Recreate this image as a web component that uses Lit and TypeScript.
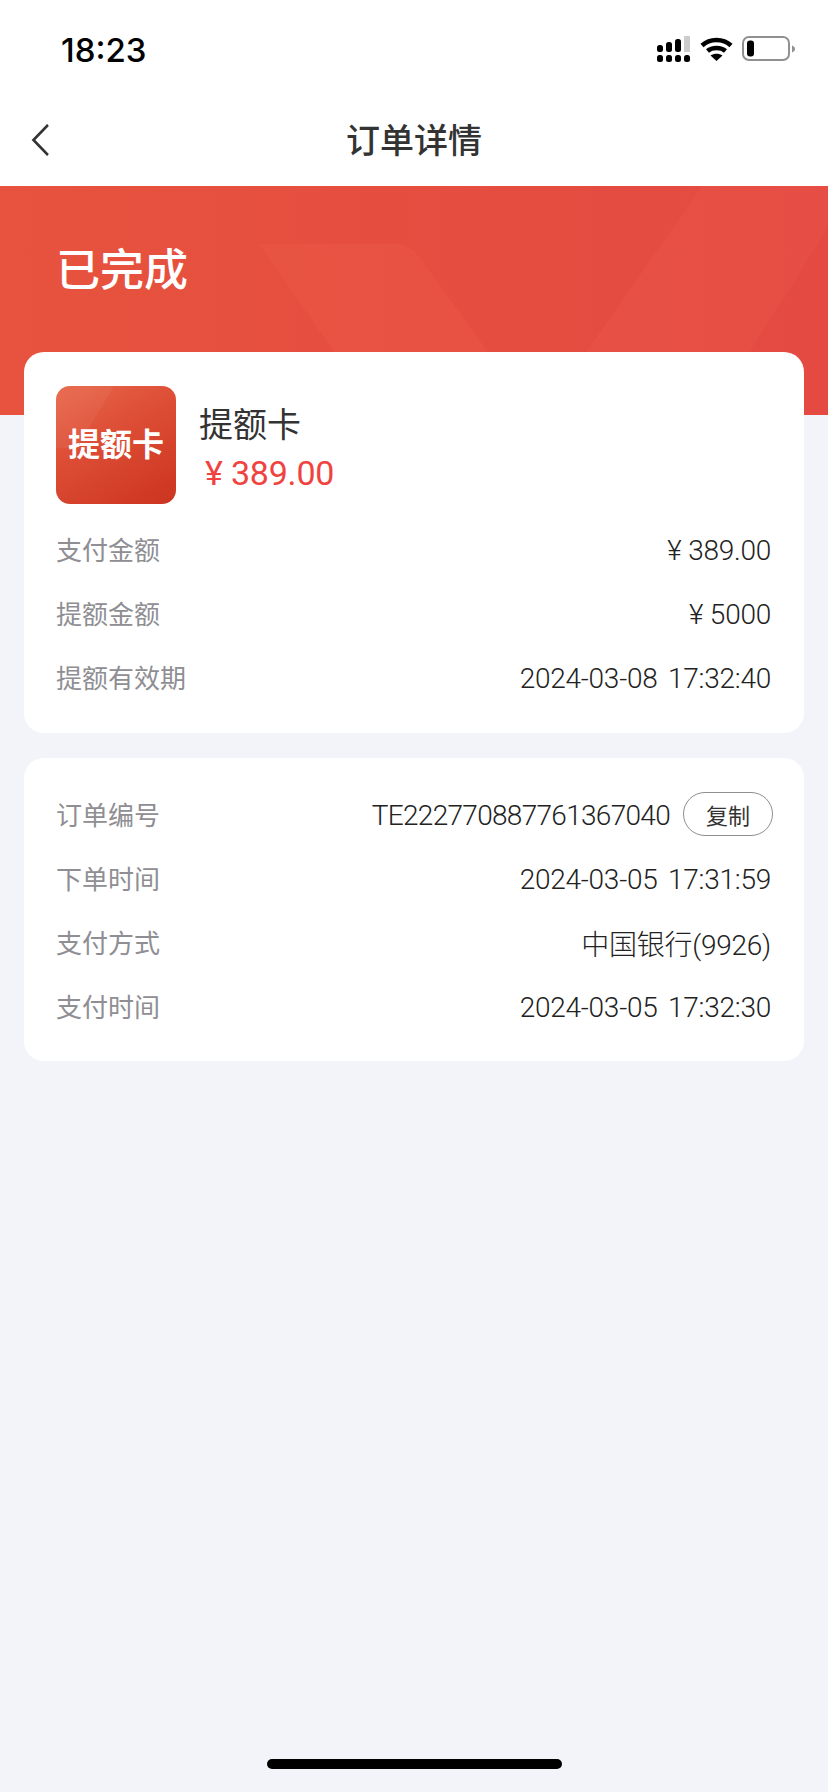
import { LitElement, html, css, svg } from "lit";
import { customElement } from "lit/decorators.js";

interface Row { label: string; value: string; kind?: "id" | "money" }

const first: Row[] = [
  { label: "支付金额", value: "¥ 389.00", kind: "money" },
  { label: "提额金额", value: "¥ 5000", kind: "money" },
  { label: "提额有效期", value: "2024-03-08 17:32:40" },
];
const second: Row[] = [
  { label: "订单编号", value: "TE222770887761367040", kind: "id" },
  { label: "下单时间", value: "2024-03-05 17:31:59" },
  { label: "支付方式", value: "中国银行(9926)" },
  { label: "支付时间", value: "2024-03-05 17:32:30" },
];

@customElement("app-root")
export class AppRoot extends LitElement {
  static styles = css`
    :host {
      display: block;
      width: 828px;
      height: 1792px;
      position: relative;
      overflow: hidden;
      background: #f3f4f9;
      font-family: Roboto, "Noto Sans CJK SC", sans-serif;
      color: #333;
    }
    .status {
      height: 88px;
      background: #fff;
      display: flex;
      align-items: center;
      justify-content: space-between;
      padding: 11px 29px 0 61px;
      box-sizing: border-box;
    }
    .time {
      font-family: Inter, sans-serif;
      font-size: 33px;
      font-weight: 500;
      color: #000;
    }
    .status svg { display: block; }
    .nav {
      height: 98px;
      background: #fff;
      position: relative;
      display: flex;
      align-items: center;
      justify-content: center;
      padding-top: 2px;
      box-sizing: border-box;
    }
    .nav h1 {
      margin: 0;
      font-size: 34px;
      font-weight: 500;
      color: #333;
    }
    .back { position: absolute; left: 31px; top: 36px; }
    .banner {
      height: 229px;
      position: relative;
      overflow: hidden;
      background: linear-gradient(90deg, #e7533e 0%, #e54d40 60%, #e44a42 100%);
      padding: 55px 0 0 56px;
      box-sizing: border-box;
    }
    .banner svg { position: absolute; left: 0; top: 0; }
    .banner h2 {
      position: relative;
      margin: 0;
      font-size: 44px;
      line-height: 60px;
      font-weight: 500;
      color: #fff;
    }
    .cards {
      margin-top: -63px;
      padding: 0 24px;
      position: relative;
      display: flex;
      flex-direction: column;
      gap: 25px;
    }
    .card {
      background: #fff;
      border-radius: 20px;
      padding: 0 33px 0 32px;
    }
    .card.one { height: 381px; padding-top: 34px; box-sizing: border-box; }
    .card.two { height: 303px; padding-top: 24px; box-sizing: border-box; }
    .head { display: flex; align-items: flex-start; margin-bottom: 13px; }
    .thumb {
      width: 120px;
      height: 118px;
      border-radius: 14px;
      position: relative;
      overflow: hidden;
      background: linear-gradient(150deg, #e8674a 0%, #dc4c34 45%, #cc3420 100%);
      display: flex;
      align-items: center;
      justify-content: center;
      flex: none;
    }
    .thumb::before {
      content: "";
      position: absolute;
      left: 0;
      top: 0;
      width: 58px;
      height: 62px;
      background: rgba(255, 255, 255, 0.05);
      clip-path: polygon(0 0, 100% 0, 36% 100%, 0 100%);
    }
    .thumb span {
      position: relative;
      font-size: 32px;
      font-weight: 700;
      color: #fff;
      padding-bottom: 6px;
    }
    .info { margin-left: 23px; padding-top: 16px; }
    .name { font-size: 34px; line-height: 46px; font-weight: 400; color: #333; }
    .price {
      font-size: 34px;
      line-height: 46px;
      margin-top: 2px;
      margin-left: 6px;
      color: #f0433f;
      letter-spacing: -0.2px;
      white-space: pre;
    }
    .row {
      height: 64px;
      display: flex;
      align-items: center;
      justify-content: space-between;
    }
    .label { font-size: 26px; color: #8e8e93; padding-bottom: 1px; }
    .value {
      font-size: 28px;
      font-weight: 300;
      color: #222;
      display: flex;
      align-items: center;
      white-space: pre;
      padding-top: 2px;
      letter-spacing: -0.25px;
      word-spacing: 4px;
    }
    .value.id { letter-spacing: -0.7px; }
    .value.money { word-spacing: 0; }
    .copy {
      margin-left: 13px;
      width: 90px;
      height: 44px;
      margin-right: -2px;
      margin-top: -2px;
      box-sizing: border-box;
      border: 1px solid #8e8e93;
      border-radius: 22px;
      font-size: 22px;
      font-weight: 400;
      letter-spacing: 0;
      display: flex;
      align-items: center;
      justify-content: center;
      color: #333;
    }
    .home {
      position: absolute;
      left: 267px;
      bottom: 23px;
      width: 295px;
      height: 10px;
      border-radius: 5px;
      background: #000;
    }
  `;

  private row(r: Row) {
    return html`<div class="row">
      <span class="label">${r.label}</span>
      <span class="value ${r.kind ?? ""}">${r.value}${r.kind === "id" ? html`<span class="copy">复制</span>` : ""}</span>
    </div>`;
  }

  render() {
    return html`
      <div class="status">
        <span class="time">18:23</span>
        <svg width="142" height="28" viewBox="0 0 142 28">
          <g fill="#000">
            <rect x="0" y="9" width="6" height="7" rx="2.500"/>
            <rect x="9" y="6" width="6" height="10" rx="2.500"/>
            <rect x="18" y="3" width="6" height="13" rx="2.500"/>
            <rect x="0" y="19" width="6" height="7" rx="2.500"/>
            <rect x="9" y="19" width="6" height="7" rx="2.500"/>
            <rect x="18" y="19" width="6" height="7" rx="2.500"/>
            <rect x="27" y="19" width="6" height="7" rx="2.500"/>
          </g>
          <rect x="27" y="0" width="6" height="16" fill="#ccc"/>
          <g fill="none" stroke="#000" stroke-width="4.500">
            <path d="M45 9.500C53 2 66 2 74 9.500"/>
            <path d="M50.500 15C55 11 64 11 68.500 15"/>
          </g>
          <path d="M59.500 25L53.500 19.500C57 17 62 17 65.500 19.500Z" fill="#000"/>
          <rect x="86" y="1" width="46" height="23" rx="6" fill="none" stroke="#909090" stroke-width="2"/>
          <rect x="90" y="4.500" width="7" height="16" rx="3" fill="#000"/>
          <path d="M135 9.500C137 10.500 138 11.500 138 13C138 14.500 137 15.500 135 16.500Z" fill="#909090"/>
        </svg>
      </div>
      <div class="nav">
        <svg class="back" width="24" height="32" viewBox="0 0 24 32">
          <path d="M20 1L3 16L20 31" transform="scale(0.85 1)" fill="none" stroke="#333" stroke-width="3"/>
        </svg>
        <h1>订单详情</h1>
      </div>
      <div class="banner">
        <svg width="828" height="229" viewBox="0 0 828 229">
          ${svg`
            <path d="M259 58H395Q410 58 420 72L534 229H378Z" fill="#ff8a60" opacity="0.09"/>
            <path d="M702 0H828V42L710 229H542Z" fill="#ff7a60" opacity="0.09"/>
          `}
        </svg>
        <h2>已完成</h2>
      </div>
      <div class="cards">
        <div class="card one">
          <div class="head">
            <div class="thumb"><span>提额卡</span></div>
            <div class="info">
              <div class="name">提额卡</div>
              <div class="price">¥ 389.00</div>
            </div>
          </div>
          ${first.map((r) => this.row(r))}
        </div>
        <div class="card two">
          ${second.map((r) => this.row(r))}
        </div>
      </div>
      <div class="home"></div>
    `;
  }
}
